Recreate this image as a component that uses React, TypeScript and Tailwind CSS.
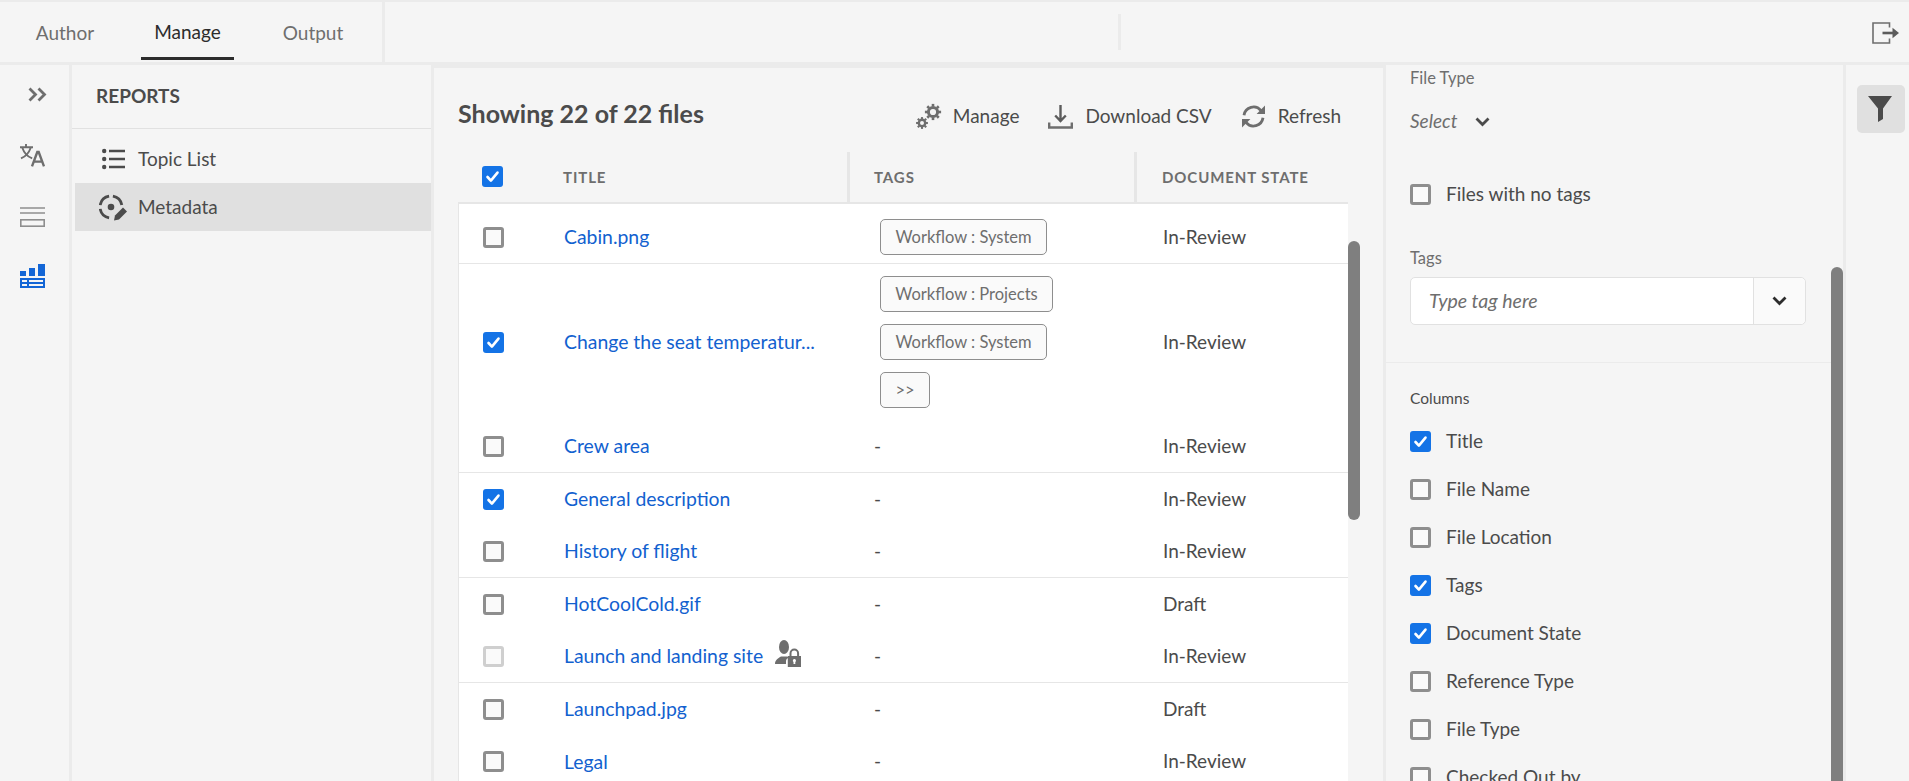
import React from "react";

type CkState = "on" | "off" | "dim";

function Ck({ state = "off" }: { state?: CkState }) {
  if (state === "on") {
    return (
      <span className="flex h-[21px] w-[21px] shrink-0 items-center justify-center rounded-[3px] bg-[#1473e6]">
        <svg width="15" height="15" viewBox="0 0 15 15" fill="none">
          <path d="M2.5 8l3.4 3.6L12.5 3.6" stroke="#fff" strokeWidth="2.6" strokeLinecap="round" strokeLinejoin="round" />
        </svg>
      </span>
    );
  }
  if (state === "dim") {
    return <span className="block h-[21px] w-[21px] shrink-0 rounded-[3px] border-[3px] border-[#cfcfcf] bg-[#fafafa]" />;
  }
  return <span className="block h-[21px] w-[21px] shrink-0 rounded-[3px] border-[3px] border-[#8e8e8e] bg-[#fafafa]" />;
}

function Gear({ cx, cy, r, t, s }: { cx: number; cy: number; r: number; t: number; s: number }) {
  const angles = [0, 45, 90, 135, 180, 225, 270, 315];
  return (
    <g>
      <circle cx={cx} cy={cy} r={r} fill="none" stroke="#6e6e6e" strokeWidth={s} />
      {angles.map((a) => (
        <rect key={a} x={cx - t / 2} y={cy - r - s / 2 - t + 0.6} width={t} height={t} fill="#6e6e6e" transform={`rotate(${a} ${cx} ${cy})`} />
      ))}
    </g>
  );
}

const GearsIcon = () => (
  <svg width="27" height="27" viewBox="6 7 27 27" className="shrink-0">
    <Gear cx={23} cy={16} r={4.6} t={2.6} s={3} />
    <Gear cx={12} cy={27} r={3.2} t={2.1} s={2.4} />
  </svg>
);

const DownloadIcon = () => (
  <svg width="25" height="25" viewBox="0 0 25 25" fill="none" className="block shrink-0">
    <path d="M12.5 1v15.5M7.2 11.5l5.3 5.5 5.3-5.5" stroke="#5c5c5c" strokeWidth="2.4" />
    <path d="M1.2 18.5v5h22.6v-5" stroke="#6e6e6e" strokeWidth="2.4" />
  </svg>
);

const RefreshIcon = () => (
  <svg width="25" height="25" viewBox="0 0 25 25" fill="none" className="block shrink-0">
    <path d="M3 11.2A9.6 9.6 0 0 1 20 6.6" stroke="#6e6e6e" strokeWidth="2.8" />
    <path d="M24 1.5V10h-8.4z" fill="#6e6e6e" />
    <path d="M22 13.8A9.6 9.6 0 0 1 5 18.4" stroke="#6e6e6e" strokeWidth="2.8" />
    <path d="M1 23.5V15h8.4z" fill="#6e6e6e" />
  </svg>
);

const PersonLock = () => (
  <svg width="26" height="27" viewBox="6 3 26 27" className="block shrink-0">
    <ellipse cx="15" cy="10" rx="5" ry="7" fill="#6e6e6e" />
    <path d="M6 27c0-4 3.5-6 6-7.5h6c1 .4 1.6.8 2 1.2-2 .6-3 1.8-3 3.5V27z" fill="#6e6e6e" />
    <path d="M21.5 19v-2.6a3.8 3.8 0 0 1 7.6 0V19" fill="none" stroke="#6e6e6e" strokeWidth="2" />
    <path fillRule="evenodd" d="M18.8 19H32v11H18.8zM25.4 22a1.6 1.6 0 0 0-.9 2.9V27h1.8v-2.1a1.6 1.6 0 0 0-.9-2.9z" fill="#6e6e6e" />
  </svg>
);

const Chevron = ({ cls }: { cls: string }) => (
  <svg width="15" height="10" viewBox="0 0 15 10" fill="none" className={cls}>
    <path d="M1.5 1.5l6 6 6-6" stroke="currentColor" strokeWidth="2.8" />
  </svg>
);

function Pill({ label, wide }: { label: string; wide?: string }) {
  return (
    <span className={`flex h-[36px] items-center justify-center rounded-[5px] border border-[#8e8e8e] bg-[#fafafa] text-[16.5px] text-[#6e6e6e] ${wide ?? ""}`}>
      {label}
    </span>
  );
}

type Row = {
  title: string;
  state: string;
  ck: CkState;
  h: string;
  border: boolean;
  tags?: React.ReactNode;
  lock?: boolean;
};

const rows: Row[] = [
  { title: "Cabin.png", state: "In-Review", ck: "off", h: "h-[60px] pt-[7px]", border: true, tags: <Pill label="Workflow : System" wide="w-[167px]" /> },
  {
    title: "Change the seat temperatur...",
    state: "In-Review",
    ck: "on",
    h: "h-[156px]",
    border: false,
    tags: (
      <div className="flex flex-col items-start gap-[12px]">
        <Pill label="Workflow : Projects" wide="w-[173px]" />
        <Pill label="Workflow : System" wide="w-[167px]" />
        <Pill label=">>" wide="w-[50px]" />
      </div>
    ),
  },
  { title: "Crew area", state: "In-Review", ck: "off", h: "h-[53px]", border: true },
  { title: "General description", state: "In-Review", ck: "on", h: "h-[52px]", border: false },
  { title: "History of flight", state: "In-Review", ck: "off", h: "h-[53px]", border: true },
  { title: "HotCoolCold.gif", state: "Draft", ck: "off", h: "h-[52px]", border: false },
  { title: "Launch and landing site", state: "In-Review", ck: "dim", h: "h-[53px]", border: true, lock: true },
  { title: "Launchpad.jpg", state: "Draft", ck: "off", h: "h-[52px]", border: false },
  { title: "Legal", state: "In-Review", ck: "off", h: "h-[53px]", border: false },
];

const columns: [string, CkState][] = [
  ["Title", "on"],
  ["File Name", "off"],
  ["File Location", "off"],
  ["Tags", "on"],
  ["Document State", "on"],
  ["Reference Type", "off"],
  ["File Type", "off"],
  ["Checked Out by", "off"],
];

export default function App() {
  return (
    <div className="flex h-screen w-full flex-col overflow-hidden border-t-2 border-[#ebebeb] bg-[#f5f5f5] text-[#4b4b4b] [font-family:Lato,sans-serif]">
      {/* Top bar */}
      <header className="flex h-[63px] shrink-0 items-stretch border-b-[3px] border-[#ebebeb]">
        <nav className="flex w-[385px] items-stretch border-r-[3px] border-[#ebebeb] pl-[22px] text-[19px]">
          <span className="flex w-[86px] items-center justify-center pt-[2px] text-[#6e6e6e]">Author</span>
          <span className="mb-[2px] ml-[33px] flex w-[93px] items-center justify-center border-b-[3px] border-[#2c2c2c] pt-[5px] text-[#2c2c2c]">Manage</span>
          <span className="ml-[35px] flex w-[88px] items-center justify-center pt-[2px] text-[#6e6e6e]">Output</span>
        </nav>
        <div className="ml-[733px] mt-[12px] h-[36px] w-[3px] bg-[#ebebeb]" />
        <div className="ml-auto mr-[10px] flex items-center pt-[2px]">
          <svg width="27" height="22" viewBox="0 0 27 22" fill="none">
            <path d="M17.5 5.5V1H1v20h16.5v-4.5" stroke="#6e6e6e" strokeWidth="1.6" />
            <path d="M10.5 11H22" stroke="#5c5c5c" strokeWidth="2.6" />
            <path d="M20.5 5.8L27 11l-6.5 5.2z" fill="#5c5c5c" />
          </svg>
        </div>
      </header>

      <div className="flex min-h-0 flex-1">
        {/* Left rail */}
        <aside className="flex w-[72px] shrink-0 flex-col items-start border-r-[3px] border-[#ebebeb] pl-[20px] pt-[22px] text-[#6e6e6e]">
          <svg width="19" height="15" viewBox="0 0 19 15" fill="none" className="ml-[8px]">
            <path d="M1.5 1.5l6 6-6 6M10.5 1.5l6 6-6 6" stroke="#6e6e6e" strokeWidth="2.8" />
          </svg>
          <svg width="25" height="23" viewBox="0 0 25 23" fill="none" className="mt-[42px]">
            <path d="M0 3.2h13M6 0v3.2M2.4 4c1.6 4.6 5 8.6 9.8 10.4M10.6 4C9 8.6 5.4 12.6 1 14.4" stroke="#6e6e6e" strokeWidth="1.9" />
            <path d="M12 22.4L17.3 8h1.4L24 22.4M14 17.6h8" stroke="#6e6e6e" strokeWidth="2.4" />
          </svg>
          <svg width="25" height="20" viewBox="0 0 25 20" fill="none" className="mt-[40px]">
            <path d="M0 1h25M0 6h25" stroke="#8e8e8e" strokeWidth="1.6" />
            <rect x="0.8" y="12.8" width="23.4" height="6.4" stroke="#8e8e8e" strokeWidth="1.6" />
          </svg>
          <svg width="25" height="24" viewBox="0 0 25 24" className="mt-[37px]">
            <rect x="0" y="7" width="6" height="5" fill="#1366d6" />
            <rect x="9" y="4" width="6" height="8" fill="#1366d6" />
            <rect x="18" y="0" width="7" height="12" fill="#1366d6" />
            <path fillRule="evenodd" d="M0 14h25v10H0zM2 16v2h5v-2zM9 16v2h14v-2zM2 20v2h5v-2zM9 20v2h14v-2z" fill="#1366d6" />
          </svg>
        </aside>

        {/* Reports */}
        <section className="w-[362px] shrink-0 border-r-[3px] border-[#ebebeb]">
          <div className="flex h-[64px] items-center border-b border-[#e1e1e1] pb-[1px] pl-[24px] text-[19px] font-bold text-[#4b4b4b]">REPORTS</div>
          <div className="pt-[6px] text-[19px]">
            <div className="flex h-[48px] items-center pl-[30px]">
              <svg width="23" height="22" viewBox="0 0 23 22" className="shrink-0">
                <circle cx="2.2" cy="3" r="2.2" fill="#4b4b4b" />
                <circle cx="2.2" cy="11" r="2.2" fill="#4b4b4b" />
                <circle cx="2.2" cy="19" r="2.2" fill="#4b4b4b" />
                <path d="M7 3h16M7 11h16M7 19h16" stroke="#4b4b4b" strokeWidth="2.4" />
              </svg>
              <span className="ml-[13px] mt-[1px]">Topic List</span>
            </div>
            <div className="ml-[3px] flex h-[48px] items-center bg-[#e0e0e0] pl-[24px]">
              <svg width="28" height="28" viewBox="0 0 28 28" fill="none" className="shrink-0">
                <g transform="translate(-1 1)" stroke="#4b4b4b" strokeWidth="2.8">
                  <path d="M2.2 11.1A11 11 0 0 1 11.1 2.2" />
                  <path d="M14.9 2.2A11 11 0 0 1 23.8 11.1" />
                  <path d="M11.1 23.8A11 11 0 0 1 2.2 14.9" />
                </g>
                <circle cx="12" cy="14" r="3.3" fill="#4b4b4b" />
                <path d="M15 27.5l1-5 8-8 4 4-8 8z" fill="#4b4b4b" />
              </svg>
              <span className="ml-[11px]">Metadata</span>
            </div>
          </div>
        </section>

        {/* Main */}
        <main className="flex w-[952px] min-w-0 shrink-0 flex-col border-r-[3px] border-t-[3px] border-[#ebebeb] pl-[24px]">
          <div className="flex h-[84px] shrink-0 items-start justify-between pr-[42px]">
            <h1 className="mt-[28px] text-[25px] font-bold leading-[34px] text-[#4b4b4b]">Showing 22 of 22 files</h1>
            <div className="mt-[34px] flex items-center text-[19px] text-[#4b4b4b]">
              <GearsIcon />
              <span className="ml-[10px]">Manage</span>
              <span className="ml-[29px]"><DownloadIcon /></span>
              <span className="ml-[12px]">Download CSV</span>
              <span className="ml-[29px]"><RefreshIcon /></span>
              <span className="ml-[12px]">Refresh</span>
            </div>
          </div>

          <div className="flex min-h-0 flex-1">
            <div className="w-[890px] shrink-0">
              <div className="flex h-[50px] items-stretch text-[15px] font-bold tracking-[0.06em] text-[#6e6e6e]">
                <div className="flex w-[392px] items-center border-r-[3px] border-[#e6e6e6] pb-[2px] pl-[24px]">
                  <Ck state="on" />
                  <span className="ml-[60px] mt-[3px]">TITLE</span>
                </div>
                <div className="flex w-[287px] items-center border-r-[3px] border-[#e6e6e6] pl-[24px]">
                  <span className="mt-[1px]">TAGS</span>
                </div>
                <div className="flex items-center pl-[25px]">
                  <span className="mt-[1px]">DOCUMENT STATE</span>
                </div>
              </div>
              <div className="border-l border-t-2 border-[#e6e6e6] bg-white text-[19px]">
                {rows.map((r) => (
                  <div key={r.title} className={`flex items-center ${r.h} ${r.border ? "border-b border-[#e6e6e6]" : ""}`}>
                    <div className="w-[105px] shrink-0 pl-[24px]">
                      <Ck state={r.ck} />
                    </div>
                    <div className="flex w-[285px] shrink-0 items-center text-[19.4px] text-[#1261cf]">
                      <span>{r.title}</span>
                      {r.lock ? <span className="mb-[6px] ml-[12px]"><PersonLock /></span> : null}
                    </div>
                    <div className="w-[287px] shrink-0 pl-[25px] text-[#4b4b4b]">
                      {r.tags ? <div className="ml-[6px]">{r.tags}</div> : "-"}
                    </div>
                    <div className="pl-[27px] text-[#4b4b4b]">{r.state}</div>
                  </div>
                ))}
              </div>
            </div>
            <div className="w-[12px] shrink-0 pt-[89px]">
              <div className="h-[279px] rounded-[6px] bg-[#7f7f7f]" />
            </div>
          </div>
        </main>

        {/* Filter panel */}
        <section className="flex w-[460px] shrink-0 border-r-[3px] border-[#ebebeb]">
          <div className="min-w-0 flex-1">
            <div className="pl-[24px] pt-[3px]">
              <div className="text-[16.5px] leading-[20px] text-[#6e6e6e]">File Type</div>
              <div className="mt-[22px] flex items-center text-[19px] italic leading-[22px] text-[#6e6e6e]">
                <span>Select</span>
                <Chevron cls="ml-[18px] mt-[1px] text-[#4b4b4b]" />
              </div>
              <label className="mt-[48px] flex items-center text-[19px]">
                <Ck />
                <span className="ml-[15px]">Files with no tags</span>
              </label>
              <div className="mt-[39px] text-[16.5px] leading-[20px] text-[#6e6e6e]">Tags</div>
              <div className="mt-[9px] flex h-[48px] w-[396px] rounded-[5px] border border-[#e1e1e1] bg-white">
                <div className="flex flex-1 items-center pl-[18px] text-[19.5px] italic text-[#6e6e6e]">Type tag here</div>
                <div className="flex w-[52px] items-center justify-center rounded-r-[5px] border-l border-[#e1e1e1] bg-[#fafafa]">
                  <Chevron cls="text-[#2c2c2c]" />
                </div>
              </div>
            </div>
            <div className="mt-[37px] border-t border-[#ebebeb] pl-[24px] pt-[25px]">
              <div className="text-[15.5px] leading-[20px] text-[#4b4b4b]">Columns</div>
              <div className="mt-[10px] flex flex-col">
                {columns.map(([label, st]) => (
                  <div key={label} className="flex h-[48px] shrink-0 items-center text-[19px]">
                    <Ck state={st} />
                    <span className="ml-[15px]">{label}</span>
                  </div>
                ))}
              </div>
            </div>
          </div>
          <div className="w-[12px] shrink-0 pt-[202px]">
            <div className="h-[600px] rounded-t-[6px] bg-[#7f7f7f]" />
          </div>
        </section>

        {/* Right rail */}
        <aside className="min-w-0 flex-1 pl-[11px] pt-[20px]">
          <div className="flex h-[48px] w-[48px] items-center justify-center rounded-[5px] bg-[#e0e0e0] pr-[2px]">
            <svg width="24" height="26" viewBox="0 0 24 26">
              <path d="M0 0h24L15 12.5V23l-5 3V12.5z" fill="#4b4b4b" />
            </svg>
          </div>
        </aside>
      </div>
    </div>
  );
}
